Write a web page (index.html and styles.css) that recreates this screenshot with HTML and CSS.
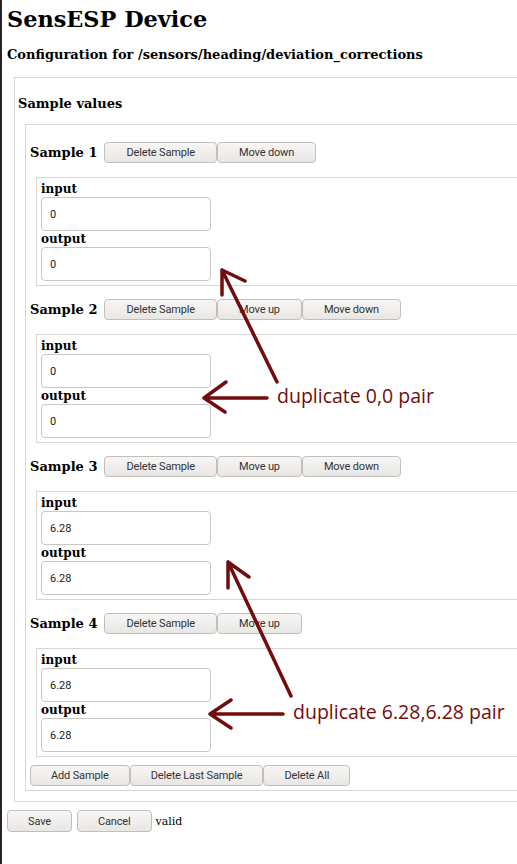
FILE: index.html
```html
<!DOCTYPE html>
<html lang="en">
<head>
<meta charset="utf-8">
<title>SensESP Device</title>
<link rel="stylesheet" href="styles.css">
</head>
<body>
<div class="page">
  <h1 class="title">SensESP Device</h1>
  <h2 class="subtitle">Configuration for /sensors/heading/deviation_corrections</h2>

  <div class="box outer">
    <h3 class="box-title">Sample values</h3>
    <div class="box samples">
      <div class="sample-head">
        <span class="sample-name">Sample 1</span>
        <div class="btn-group">
          <button class="btn">Delete Sample</button>
          <button class="btn">Move down</button>
        </div>
      </div>
      <div class="box sample">
        <label class="field-label">input</label>
        <input class="field" type="text" value="0">
        <label class="field-label">output</label>
        <input class="field" type="text" value="0">
      </div>

      <div class="sample-head">
        <span class="sample-name">Sample 2</span>
        <div class="btn-group">
          <button class="btn">Delete Sample</button>
          <button class="btn">Move up</button>
          <button class="btn">Move down</button>
        </div>
      </div>
      <div class="box sample">
        <label class="field-label">input</label>
        <input class="field" type="text" value="0">
        <label class="field-label">output</label>
        <input class="field" type="text" value="0">
      </div>

      <div class="sample-head">
        <span class="sample-name">Sample 3</span>
        <div class="btn-group">
          <button class="btn">Delete Sample</button>
          <button class="btn">Move up</button>
          <button class="btn">Move down</button>
        </div>
      </div>
      <div class="box sample">
        <label class="field-label">input</label>
        <input class="field" type="text" value="6.28">
        <label class="field-label">output</label>
        <input class="field" type="text" value="6.28">
      </div>

      <div class="sample-head">
        <span class="sample-name">Sample 4</span>
        <div class="btn-group">
          <button class="btn">Delete Sample</button>
          <button class="btn">Move up</button>
        </div>
      </div>
      <div class="box sample">
        <label class="field-label">input</label>
        <input class="field" type="text" value="6.28">
        <label class="field-label">output</label>
        <input class="field" type="text" value="6.28">
      </div>

      <div class="btn-group list-actions">
        <button class="btn">Add Sample</button>
        <button class="btn">Delete Last Sample</button>
        <button class="btn">Delete All</button>
      </div>
    </div>
  </div>

  <div class="form-actions">
    <button class="btn">Save</button>
    <button class="btn">Cancel</button>
    <span class="status">valid</span>
  </div>
</div>

<svg class="annotations" width="517" height="864" viewBox="0 0 517 864" aria-hidden="true">
  <g fill="none" stroke="#720d0d" stroke-width="3.5" stroke-linecap="round" stroke-linejoin="round">
    <path d="M277 382 L222 270 M222 270 L222 295 M222 270 L245 281"/>
    <path d="M267 398 L204 398 M204 398 L226 382 M204 398 L225 412"/>
    <path d="M291 696 L228 562 M228 562 L228 588 M228 562 L249 577"/>
    <path d="M283 714 L210 714 M210 714 L231 700 M210 714 L231 728"/>
  </g>
</svg>
<div class="note note-1">duplicate 0,0 pair</div>
<div class="note note-2">duplicate 6.28,6.28 pair</div>
</body>
</html>
```

FILE: styles.css
```css
html {
  background: #ffffff;
  overflow: hidden;
}

body {
  margin: 0;
  min-height: 864px;
  border-left: 2px solid #2a2222;
  position: relative;
  font-family: "DejaVu Serif", serif;
  color: #000;
}

.page {
  padding: 0 0 0 5px;
  width: 620px;
}

.title {
  margin: 5px 0 0;
  font-size: 22.4px;
  line-height: 28px;
  font-weight: bold;
}

.subtitle {
  margin: 14px 0 0;
  font-size: 13px;
  line-height: 16px;
  font-weight: bold;
}

.box {
  border: 1px solid #d6d6d6;
}

.outer {
  margin: 14px 0 0 7px;
  padding: 17px 0 10px 10px;
}

.box-title {
  margin: 0 0 0 -7px;
  font-size: 13px;
  line-height: 17px;
  font-weight: bold;
}

.samples {
  margin-top: 12px;
  padding: 17px 0 4px 4px;
}

.sample-head {
  display: flex;
  align-items: center;
  gap: 7px;
  height: 21px;
  margin-top: 13px;
}

.sample-head:first-child {
  margin-top: 0;
}

.sample-name {
  font-size: 13px;
  font-weight: bold;
  line-height: 21px;
}

.btn-group {
  display: flex;
  gap: 0;
}

.btn {
  box-sizing: border-box;
  height: 21px;
  margin: 0;
  padding: 0 21px;
  border: 1px solid #c2bfba;
  border-radius: 4px;
  background: linear-gradient(#f7f6f5, #e9e7e4);
  font-family: Roboto, "Noto Sans", sans-serif;
  font-size: 11px;
  letter-spacing: -0.15px;
  color: #333;
  line-height: 19px;
  white-space: nowrap;
}

.list-actions .btn,
.form-actions .btn {
  padding: 0 20px;
}

.sample {
  margin: 14px 0 0 6px;
  padding: 3px 4px 4px 4px;
  display: flex;
  flex-direction: column;
  align-items: flex-start;
}

.field-label {
  font-size: 12px;
  font-weight: bold;
  line-height: 16px;
}

.field {
  box-sizing: border-box;
  width: 170px;
  height: 34px;
  margin: 0;
  padding: 0 8px;
  border: 1px solid #c9c7c4;
  border-radius: 4px;
  background: #fff;
  font-family: Roboto, "Noto Sans", sans-serif;
  font-size: 11px;
  color: #222;
}

.list-actions {
  margin-top: 8px;
}

.form-actions {
  display: flex;
  align-items: center;
  margin-top: 8px;
}

.form-actions .btn {
  height: 22px;
  margin-right: 5px;
}

.form-actions .btn + .btn {
  margin-right: 4px;
}

.status {
  font-size: 11px;
}

.annotations {
  position: absolute;
  left: -2px;
  top: 0;
  pointer-events: none;
}

.note {
  position: absolute;
  font-family: "Open Sans", sans-serif;
  font-size: 19.5px;
  line-height: 22px;
  color: #720d0d;
  white-space: nowrap;
}

.note-1 {
  left: 275px;
  top: 385px;
}

.note-2 {
  left: 291px;
  top: 701px;
}
```
